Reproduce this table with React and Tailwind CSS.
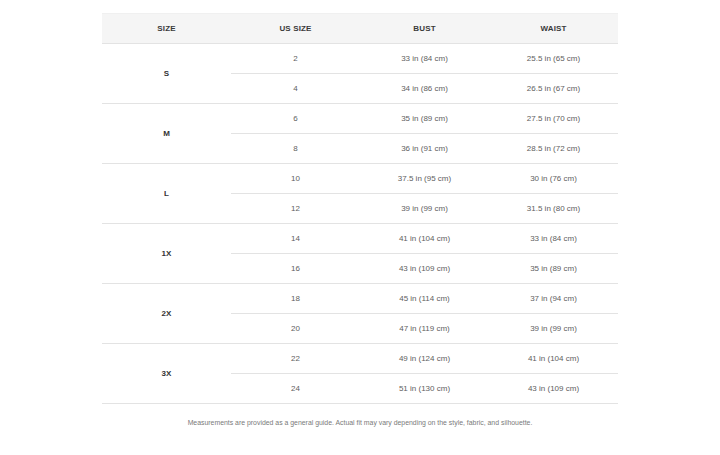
import React from "react";

const groups = [
  { size: "S", rows: [["2", "33 in (84 cm)", "25.5 in (65 cm)"], ["4", "34 in (86 cm)", "26.5 in (67 cm)"]] },
  { size: "M", rows: [["6", "35 in (89 cm)", "27.5 in (70 cm)"], ["8", "36 in (91 cm)", "28.5 in (72 cm)"]] },
  { size: "L", rows: [["10", "37.5 in (95 cm)", "30 in (76 cm)"], ["12", "39 in (99 cm)", "31.5 in (80 cm)"]] },
  { size: "1X", rows: [["14", "41 in (104 cm)", "33 in (84 cm)"], ["16", "43 in (109 cm)", "35 in (89 cm)"]] },
  { size: "2X", rows: [["18", "45 in (114 cm)", "37 in (94 cm)"], ["20", "47 in (119 cm)", "39 in (99 cm)"]] },
  { size: "3X", rows: [["22", "49 in (124 cm)", "41 in (104 cm)"], ["24", "51 in (130 cm)", "43 in (109 cm)"]] },
];

export default function App() {
  return (
    <div className="w-[720px] h-[455px] bg-white" style={{ fontFamily: '"Liberation Sans", Arial, sans-serif' }}>
      <div className="w-[516px] mx-auto pt-[13px]">
        <div className="grid grid-cols-4 h-[31px] bg-[#f5f5f5] border-t border-b border-t-[#f0f0f0] border-b-[#e3e3e3] text-[8px] font-semibold text-[#3a3a3a] tracking-[0.02em]">
          <div className="flex items-center justify-center">SIZE</div>
          <div className="flex items-center justify-center">US SIZE</div>
          <div className="flex items-center justify-center">BUST</div>
          <div className="flex items-center justify-center">WAIST</div>
        </div>
        {groups.map((g) => (
          <div key={g.size} className="flex border-b border-[#e3e3e3]">
            <div className="w-[129px] flex items-center justify-center text-[8px] font-semibold text-[#333]">{g.size}</div>
            <div className="flex-1 flex flex-col">
              {g.rows.map((r, i) => (
                <div key={i} className={i === 0 ? "grid grid-cols-3 h-[30px] text-[8px] text-[#606060] border-b border-[#e3e3e3]" : "grid grid-cols-3 h-[29px] text-[8px] text-[#606060]"}>
                  {r.map((c, j) => (
                    <div key={j} className="flex items-center justify-center">{c}</div>
                  ))}
                </div>
              ))}
            </div>
          </div>
        ))}
        <p className="mt-[13px] text-center text-[6.9px] leading-[12px] text-[#7a7a7a]">
          Measurements are provided as a general guide. Actual fit may vary depending on the style, fabric, and silhouette.
        </p>
      </div>
    </div>
  );
}
